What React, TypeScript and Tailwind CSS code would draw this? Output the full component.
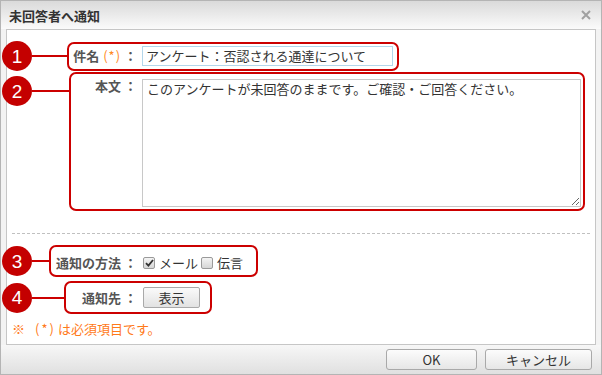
import type { ReactNode } from 'react';

const red = 'border-[#cc0000]';

function Callout({
  n,
  lineClass,
  rowClass,
  markClass,
  boxClass,
  children,
}: {
  n: number;
  lineClass: string;
  rowClass: string;
  markClass: string;
  boxClass: string;
  children: ReactNode;
}) {
  return (
    <div className={`flex ${rowClass}`}>
      <div className={`ml-[-5px] flex items-center shrink-0 ${markClass}`}>
        <div className="w-[30px] h-[30px] rounded-full bg-[#c40000] text-white flex items-center justify-center font-['Liberation_Sans',sans-serif] text-[19px] leading-none">
          {n}
        </div>
        <div className={`h-[2px] bg-[#cc0000] ${lineClass}`} />
      </div>
      <div className={`border-2 ${red} rounded-[7px] flex shrink-0 ${boxClass}`}>{children}</div>
    </div>
  );
}

function Label({ className, children }: { className: string; children: ReactNode }) {
  return (
    <div className={`shrink-0 text-right pr-[5px] text-[13px] leading-[16px] font-bold text-[#555] whitespace-nowrap ${className}`}>
      {children}
    </div>
  );
}

function Check({ checked }: { checked?: boolean }) {
  return (
    <div className="w-[12px] h-[12px] shrink-0 rounded-[2px] border border-[#9a9a9a] bg-linear-to-b from-[#f4f4f4] to-[#d6d6d6] flex items-center justify-center">
      {checked && (
        <svg width="9" height="8" viewBox="0 0 9 8">
          <path d="M1 4.2 L3.4 6.6 L8 1" fill="none" stroke="#333" strokeWidth="1.8" />
        </svg>
      )}
    </div>
  );
}

export default function App() {
  return (
    <div className="w-[602px] h-[375px] border border-[#b4b4b4] bg-[#f3f3f3] flex flex-col font-['Noto_Sans_CJK_JP',sans-serif] text-[#333]">
      {/* title bar */}
      <div className="h-[28px] shrink-0 flex items-center pl-[8px] bg-linear-to-b from-[#dadada] to-[#fbfbfb]">
        <span className="text-[13px] font-bold leading-none">未回答者へ通知</span>
        <svg className="ml-auto mr-[10px]" width="10" height="10" viewBox="0 0 10 10">
          <path d="M1 1 L9 9 M9 1 L1 9" stroke="#a0a0a0" strokeWidth="2" />
        </svg>
      </div>

      {/* body */}
      <div className="flex-1 mx-[5px] border border-[#c6c6c6] bg-white flex flex-col">
        <Callout n={1} rowClass="mt-[11px] items-center" markClass="" lineClass="w-[35px]" boxClass="w-[332px] h-[29px] items-center">
          <Label className="w-[73px]">
            件名<span className="ml-[4px] text-[#ff8a1e] font-normal tracking-[1px]">(*)</span> ：
          </Label>
          <div className="w-[251px] h-[20px] border border-[#b3d6ea] px-[3px] text-[13px] leading-[18px] whitespace-nowrap">
            アンケート：否認される通達について
          </div>
        </Callout>

        <Callout n={2} rowClass="mt-[1px] items-start" markClass="mt-[4px]" lineClass="w-[37px]" boxClass="w-[516px] h-[139px] items-start">
          <Label className="w-[71px] mt-[4px]">本文 ：</Label>
          <textarea
            className="mt-[5px] w-[439px] h-[128px] border border-[#c8c8c8] px-[4px] pt-[1px] text-[13px] leading-[16px] text-[#333] outline-none"
            defaultValue="このアンケートが未回答のままです。ご確認・ご回答ください。"
          />
        </Callout>

        <div className="mt-[22px] mx-[5px] border-t border-dashed border-[#c0c0c0]" />

        <Callout n={3} rowClass="mt-[11px] items-center" markClass="" lineClass="w-[17px]" boxClass="w-[209px] h-[32px] items-center pt-[3px]">
          <Label className="w-[91px]">通知の方法 ：</Label>
          <div className="ml-[1px] flex items-center text-[13px] leading-[16px]">
            <Check checked />
            <span className="ml-[4px]">メール</span>
            <div className="ml-[3px]">
              <Check />
            </div>
            <span className="ml-[4px]">伝言</span>
          </div>
        </Callout>

        <Callout n={4} rowClass="mt-[4px] items-center" markClass="" lineClass="w-[32px]" boxClass="w-[148px] h-[33px] items-center">
          <Label className="w-[76px]">通知先 ：</Label>
          <button className="ml-[1px] w-[57px] h-[21px] border border-[#a9a9a9] rounded-[2px] bg-linear-to-b from-[#fafafa] to-[#e2e2e2] text-[13px] leading-none text-[#333]">
            表示
          </button>
        </Callout>

        <div className="mt-[7px] pl-[5px] text-[13px] leading-[16px] text-[#ff7a1a] flex">
          <span>※</span>
          <span className="ml-[10px] tracking-[2px]">(*)</span>
          <span className="ml-[2px]">は必須項目です。</span>
        </div>
      </div>

      {/* footer */}
      <div className="h-[29px] shrink-0 flex items-center justify-end gap-[8px] pr-[9px] bg-linear-to-b from-[#f7f7f7] to-[#e0e0e0]">
        <button className="w-[91px] h-[21px] border border-[#a9a9a9] rounded-[3px] bg-linear-to-b from-[#fcfcfc] to-[#e6e6e6] text-[13px] leading-none text-[#333]">
          OK
        </button>
        <button className="w-[107px] h-[21px] border border-[#a9a9a9] rounded-[3px] bg-linear-to-b from-[#fcfcfc] to-[#e6e6e6] text-[13px] leading-none text-[#333]">
          キャンセル
        </button>
      </div>
    </div>
  );
}
